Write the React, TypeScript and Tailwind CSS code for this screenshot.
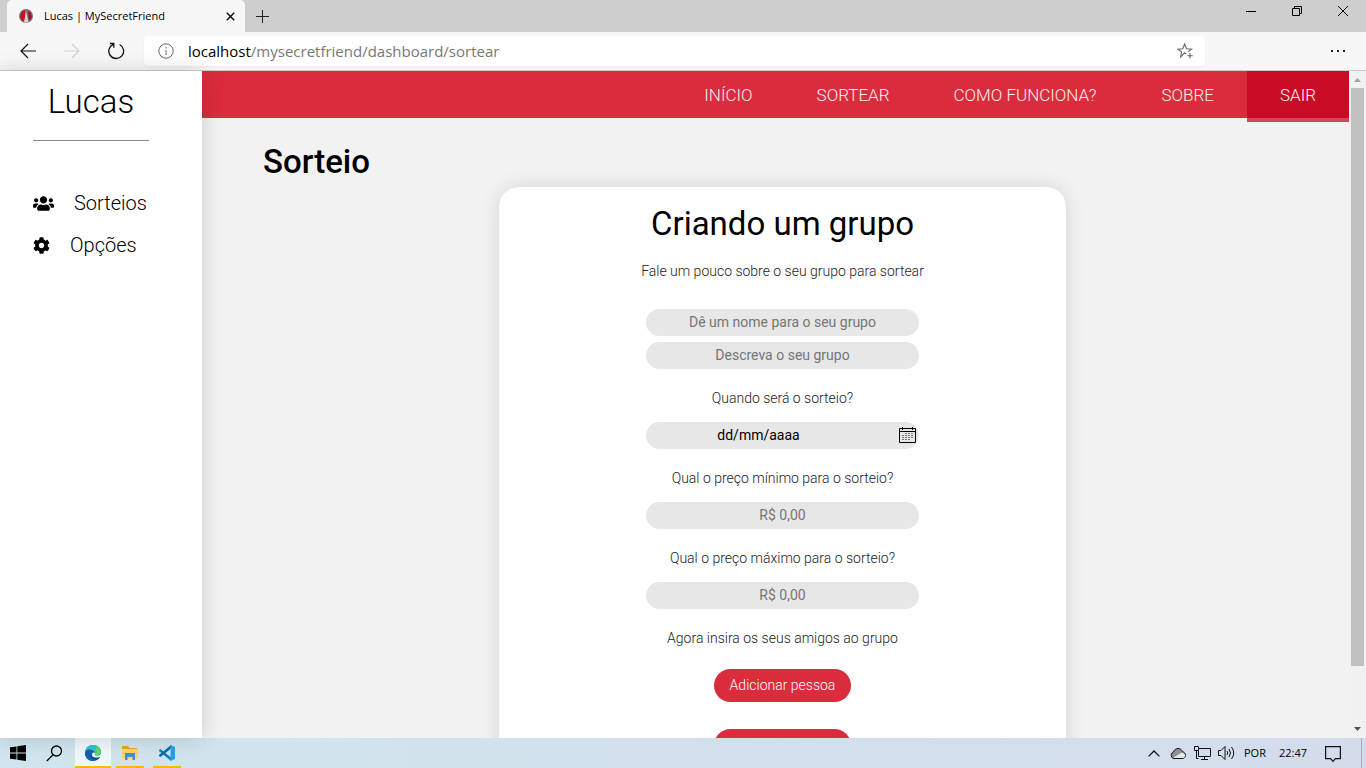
import React from "react";
import { FaUsers, FaCog } from "react-icons/fa";

const ui = "font-['Open_Sans','Noto_Sans',sans-serif]";

function Favicon() {
  return (
    <svg width="14" height="14" viewBox="0 0 14 14" aria-hidden="true">
      <circle cx="7" cy="7" r="7" fill="#7d7375" />
      <path d="M3 2.500 6 1v11L3.500 12 1 8z" fill="#c11226" />
      <path d="m9 1.500 3 3 .8 4L10 12z" fill="#9d1325" />
      <path d="M7 2 5 13.500h4.500z" fill="#d9d6d6" />
    </svg>
  );
}

function TitleBar() {
  return (
    <div className="flex h-8 shrink-0 items-stretch bg-[#cecece]">
      <div className="ml-[7px] flex w-[238px] items-center rounded-t-[5px] bg-[#f7f7f7] pl-3 pr-2.5">
        <Favicon />
        <span className="ml-[11px] flex-1 text-[11px] text-black">Lucas | MySecretFriend</span>
        <button aria-label="Fechar guia">
          <svg width="9" height="9" viewBox="0 0 9 9" stroke="#111" strokeWidth="1.500">
            <path d="m.8.8 7.400 7.400M8.200.8.8 8.200" />
          </svg>
        </button>
      </div>
      <button aria-label="Nova guia" className="ml-[11px]">
        <svg width="13" height="13" viewBox="0 0 13 13" stroke="#222" strokeWidth="1">
          <path d="M6.500 0v13M0 6.500h13" />
        </svg>
      </button>
      <div className="mb-2.5 ml-auto mr-[18px] flex items-center gap-9">
        <button aria-label="Minimizar">
          <svg width="10" height="10" viewBox="0 0 10 10" stroke="#000">
            <path d="M0 5.500h10" />
          </svg>
        </button>
        <button aria-label="Restaurar">
          <svg width="10" height="10" viewBox="0 0 10 10" fill="none" stroke="#000">
            <path d="M.5 2.500h7v7h-7zM2.500 2.500v-2h7v7h-2" />
          </svg>
        </button>
        <button aria-label="Fechar">
          <svg width="10" height="10" viewBox="0 0 10 10" stroke="#000">
            <path d="m0 0 10 10M10 0 0 10" />
          </svg>
        </button>
      </div>
    </div>
  );
}

function Toolbar() {
  return (
    <div className="flex h-[39px] shrink-0 items-center border-b border-[#cbcbcb] bg-[#f7f7f7] px-5">
      <button aria-label="Voltar">
        <svg width="16" height="16" viewBox="0 0 16 16" fill="none" stroke="#111" strokeWidth="1.200">
          <path d="M16 8H1M8 1 1 8l7 7" />
        </svg>
      </button>
      <button aria-label="Avançar" className="ml-7">
        <svg width="16" height="16" viewBox="0 0 16 16" fill="none" stroke="#d2d2d2" strokeWidth="1.200">
          <path d="M0 8h15M8 1l7 7-7 7" />
        </svg>
      </button>
      <button aria-label="Atualizar" className="ml-7">
        <svg width="17" height="18" viewBox="0 0 17 18" fill="none" stroke="#111" strokeWidth="1.300">
          <path d="M11.600 2.500a7.400 7.400 0 1 1-6.300-.2M1.800 1.500h4v4.300" />
        </svg>
      </button>
      <div className="ml-[19px] mr-[125px] flex h-[30px] flex-1 items-center rounded bg-white pl-[14px] pr-3 shadow-xs">
        <svg width="16" height="16" viewBox="0 0 16 16" fill="none" stroke="#666" aria-hidden="true">
          <circle cx="8" cy="8" r="7.200" />
          <path d="M8 7v5M8 4v1.500" />
        </svg>
        <span className="ml-3.5 flex-1 text-[15px] text-[#777]">
          <span className="text-black">localhost</span>/mysecretfriend/dashboard/sortear
        </span>
        <button aria-label="Adicionar aos favoritos">
          <svg width="16" height="16" viewBox="0 0 16 16" fill="none" stroke="#666" strokeWidth="1.100">
            <path d="m9.300 11-1.800-1.200L3.600 14l1-5.100L1 6.200l4.700-.4L7.600 1l1.900 4.800 5 .3-3.600 2.800M13 10v5.500M10.300 12.800h5.400" />
          </svg>
        </button>
      </div>
      <button aria-label="Mais opções">
        <svg width="16" height="4" viewBox="0 0 16 4" fill="#222">
          <path d="M1 1h2v2H1zM7 1h2v2H7zM13 1h2v2h-2z" />
        </svg>
      </button>
    </div>
  );
}

function Sidebar() {
  return (
    <aside className="relative z-10 w-[202px] shrink-0 bg-white pl-[33px] pr-[53px] shadow-[0_0_20px_rgba(0,0,0,0.16)]">
      <h2 className="pt-[10px] text-center text-[33px] font-light leading-[42px] text-black">Lucas</h2>
      <hr className="mt-[17px] border-[#8b8b8b]" />
      <nav className="mt-[50px] flex flex-col gap-[18px] text-[20px] font-light leading-6 text-black">
        <a href="#sorteios" className="flex items-center gap-5">
          <FaUsers className="h-[17px] w-[21px]" />
          Sorteios
        </a>
        <a href="#opcoes" className="flex items-center gap-5">
          <FaCog className="size-[17px]" />
          Opções
        </a>
      </nav>
    </aside>
  );
}

function TopNav() {
  return (
    <nav className="flex h-[47px] justify-end bg-[#da2c3d] text-[17px] font-light leading-[49px] text-[#fdeef0]">
      <a href="#inicio" className="px-8">INÍCIO</a>
      <a href="#sortear" className="px-8">SORTEAR</a>
      <a href="#como-funciona" className="px-8">COMO FUNCIONA?</a>
      <a href="#sobre" className="px-[33px]">SOBRE</a>
      <a href="#sair" className="-mb-1 h-[51px] border-b-4 border-[#d4455b] bg-[#c90c26] px-[33px]">SAIR</a>
    </nav>
  );
}

const field =
  "h-[27px] w-full rounded-full bg-[#e7e7e7] pb-0.5 text-center text-[14px] font-normal text-black outline-none placeholder:text-[#757575]";
const label = "mt-[19px] mb-[13px] block text-[14px] font-light leading-[21px] text-[#222]";

function CalendarIcon() {
  return (
    <svg width="17" height="17" viewBox="0 0 17 17" fill="none" stroke="#000" aria-hidden="true">
      <path d="M.5 1.500h16v14H.5zM.5 4.500h16M3.500 0v3M13.500 0v3" />
      <path d="M6 6.500h9M3 8.500h12M3 10.500h12M3 12.500h9" stroke="#777" strokeDasharray="2 1" />
    </svg>
  );
}

function GroupForm() {
  return (
    <form className="mx-auto mt-1 w-[567px] max-w-full rounded-[20px] bg-white pt-[14px] text-center shadow-[0_0_20px_rgba(0,0,0,0.12)]">
      <h2 className="text-[33px] font-normal leading-[46px] text-black">Criando um grupo</h2>
      <p className="mt-[14px] text-[14px] font-light leading-[21px] text-[#222]">
        Fale um pouco sobre o seu grupo para sortear
      </p>
      <div className="mx-auto mt-[27px] w-[273px]">
        <input aria-label="Nome do grupo" placeholder="Dê um nome para o seu grupo" className={field} />
        <input aria-label="Descrição do grupo" placeholder="Descreva o seu grupo" className={`${field} mt-1.5`} />
        <label htmlFor="data" className={label}>Quando será o sorteio?</label>
        <div className="flex h-[27px] items-center rounded-full bg-[#e7e7e7] pr-[3px]">
          <input
            id="data"
            placeholder="dd/mm/aaaa"
            className="min-w-0 flex-1 bg-transparent pr-7 text-center text-[14px] text-black outline-none placeholder:text-black"
          />
          <button type="button" aria-label="Abrir calendário">
            <CalendarIcon />
          </button>
        </div>
        <label htmlFor="minimo" className={label}>Qual o preço mínimo para o sorteio?</label>
        <input id="minimo" placeholder="R$ 0,00" className={`${field} block`} />
        <label htmlFor="maximo" className={label}>Qual o preço máximo para o sorteio?</label>
        <input id="maximo" placeholder="R$ 0,00" className={`${field} block`} />
        <p className="mt-[19px] text-[14px] font-light leading-[21px] text-[#222]">Agora insira os seus amigos ao grupo</p>
        <div className="mt-5 flex flex-col items-center gap-[27px] pb-10">
          <button type="button" className="h-[33px] w-[137px] rounded-full bg-[#da2c3d] text-[14px] font-light text-white">
            Adicionar pessoa
          </button>
          <button type="submit" aria-label="Criar grupo" className="h-[33px] w-[137px] rounded-full bg-[#da2c3d]" />
        </div>
      </div>
    </form>
  );
}

function ScrollTrack() {
  return (
    <div className="flex w-[17px] shrink-0 flex-col items-center justify-between bg-[#f1f1f1] pb-[7px] pt-[7px]" aria-hidden="true">
      <svg width="7" height="4" viewBox="0 0 7 4" fill="#a3a3a3"><path d="M0 4 3.500 0 7 4z" /></svg>
      <div className="mb-[61px] mt-1.5 w-[13px] flex-1 bg-[#c1c1c1]" />
      <svg width="7" height="4" viewBox="0 0 7 4" fill="#505050"><path d="m0 0 3.500 4L7 0z" /></svg>
    </div>
  );
}

function EdgeLogo() {
  return (
    <svg width="16" height="16" viewBox="0 0 16 16" aria-hidden="true">
      <circle cx="8" cy="8" r="8" fill="#1475c8" />
      <path d="M0 8C0 3.500 3.500 0 8 0s8 3 8 6.500S13 11 10.500 10.500C9 10 10 9.500 10 8S8 5 5 5 0 6.500 0 8z" fill="#35c1c9" />
      <path d="M11 .6c3 1 5 3.300 5 6S13.500 11 11 10.600C9 10 10.200 9.500 10 8c1-2 2-5 1-7.400z" fill="#5fd56d" />
      <path d="M0 8c.5-3 3-4 5.500-3.500C8 5 9.500 6.500 9.800 8 7 6 5 8.500 6 11c1 2.500 3 4 5 4.300C5 17.500 0 13.500 0 8z" fill="#1062ae" />
      <path d="M7 8.300C5.500 10 8 12.800 12 12.500c1.500 0 2.500-.5 3-.5-1 1.700-2.300 2.700-4 2.900C6 14.500 4 10.500 7 8.300z" fill="#15478f" />
      <path d="M7.500 8c1-1 2.300-.6 2.500.2.100 1-.9 1.500.1 2.200 2 1 4.700.3 5.900-1.400v2.200c-3 2.200-8.500 1.600-8.900-.7-.2-1 0-1.800.4-2.500z" fill="#f0f7fa" />
    </svg>
  );
}

function FolderLogo() {
  return (
    <svg width="16" height="14" viewBox="0 0 16 14" aria-hidden="true">
      <path d="M0 0h6l1.500 2H15v3H0z" fill="#e8a51b" />
      <path d="M0 3h16v10H0z" fill="#ffd466" />
      <path d="M3 7h10v7h-2.500v-3h-5v3H3z" fill="#3a91dc" />
    </svg>
  );
}

function CodeLogo() {
  return (
    <svg width="16" height="16" viewBox="0 0 16 16" aria-hidden="true">
      <path d="m0 5 1.500-1L12 12.500V16L0 6z" fill="#137dc4" />
      <path d="m0 11 1.500 1L12 3.500V0L0 10z" fill="#0869ae" />
      <path d="m11.500 0 4.500 2v12l-4.500 2z" fill="#289fe5" />
    </svg>
  );
}

function Taskbar() {
  return (
    <footer className={`flex h-[30px] shrink-0 items-stretch bg-linear-to-r from-[#d0e5ed] to-[#d4dcec] text-black ${ui}`}>
      <button aria-label="Iniciar" className="ml-2.5">
        <svg width="16" height="16" viewBox="0 0 16 16"><path d="M0 2.300 6.500 1.400v6.200H0zM7.300 1.300 16 0v7.600H7.300zM0 8.400h6.500v6.200L0 13.700zM7.300 8.400H16V16l-8.700-1.300z" /></svg>
      </button>
      <button aria-label="Pesquisar" className="ml-5">
        <svg width="17" height="17" viewBox="0 0 17 17" fill="none" stroke="#000" strokeWidth="1.300">
          <circle cx="10.500" cy="6" r="5" /><path d="M7 9.800.8 16" />
        </svg>
      </button>
      <button aria-label="Edge" className="ml-3 flex w-9 items-center justify-center border-b-2 border-[#ffb900] bg-[#f0f7fa] pt-px"><EdgeLogo /></button>
      <button aria-label="Explorador" className="ml-[5px] flex w-7 items-center justify-center border-b-2 border-[#ffb900] pt-px"><FolderLogo /></button>
      <button aria-label="Code" className="ml-[9px] flex w-7 items-center justify-center border-b-2 border-[#ffb900] pt-px"><CodeLogo /></button>
      <div className="ml-auto flex items-center">
        <svg width="12" height="7" viewBox="0 0 12 7" fill="none" stroke="#111" strokeWidth="1.300"><path d="m.6 6.400 5.400-5.400 5.400 5.400" /></svg>
        <svg className="ml-2.5" width="16" height="11" viewBox="0 0 16 11">
          <path d="M4 10.500a3.300 3.300 0 0 1-.6-6.400C4.500 1.500 6 .5 8 .5c2.300 0 3.800 1.300 4.400 3.200 4 .6 4 6.500 0 6.800z" fill="#8f8f8f" stroke="#111" />
          <path d="m3 10 7-4.500c2-1.500 5-.5 5 2 0 1.500-1 2.500-2.500 2.500z" fill="#e8e8e8" />
        </svg>
        <svg className="ml-2" width="17" height="14" viewBox="0 0 17 14" fill="none" stroke="#111">
          <path d="M5 2.500h11.500v8H4.500V5M10.500 10.500v3M7 13.500h7M.5.500h4v4h-4zM2.500 4.500v8h2" />
        </svg>
        <svg className="ml-[7px]" width="17" height="14" viewBox="0 0 17 14" fill="none" stroke="#111">
          <path d="M.5 4.500H3l4-4v13l-4-4H.500zM9 5q1.500 2 0 4M11 3q3 4 0 8M13.500 1q4.500 6 0 12" />
        </svg>
        <span className="ml-[9px] text-[11px]">POR</span>
        <span className="ml-[13px] text-[11px]">22:47</span>
        <svg className="ml-[18px] mt-0.5" width="16" height="17" viewBox="0 0 16 17" fill="none" stroke="#111" strokeWidth="1.200">
          <path d="M.6.600h14.800v12h-5L8 15.400l-2.400-2.800h-5z" />
        </svg>
        <span className="ml-5 mr-1 h-[30px] w-px bg-[#a5adbb]" />
      </div>
    </footer>
  );
}

export default function App() {
  return (
    <div className="flex h-screen flex-col overflow-hidden">
      <header className={`shrink-0 ${ui}`}>
        <TitleBar />
        <Toolbar />
      </header>
      <div className="flex min-h-0 flex-1 font-[Roboto,sans-serif]">
        <Sidebar />
        <div className="min-w-0 flex-1 overflow-hidden bg-[#f2f2f2]">
          <TopNav />
          <main className="pl-[61px] pr-[47px] pt-[22px]">
            <h1 className="text-[33px] font-medium leading-[43px] text-black">Sorteio</h1>
            <GroupForm />
          </main>
        </div>
        <ScrollTrack />
      </div>
      <Taskbar />
    </div>
  );
}
